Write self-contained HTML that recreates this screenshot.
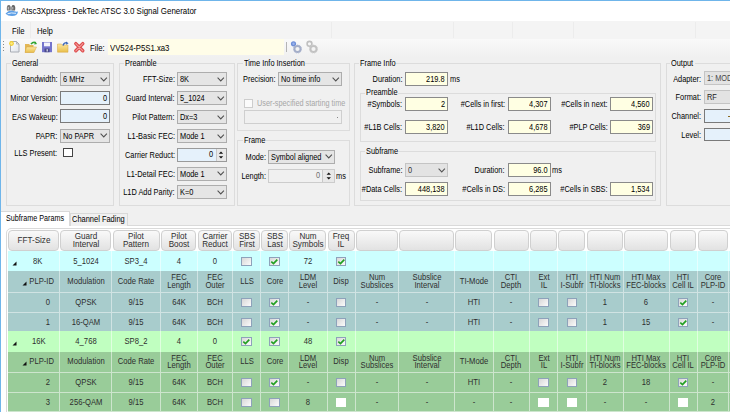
<!DOCTYPE html><html><head><meta charset="utf-8"><style>
html,body{margin:0;padding:0;width:730px;height:412px;overflow:hidden;background:#f0f0f0;}
body>div,body>svg{position:absolute;}
.t{position:absolute;white-space:nowrap;font-family:"Liberation Sans",sans-serif;}
</style></head><body>
<div style="left:0px;top:0px;width:730px;height:412px;background:#f0f0f0;"></div>
<div style="left:0px;top:0px;width:730px;height:21px;background:#fff;"></div>
<div style="left:0px;top:0px;width:730px;height:1px;background:#6fb5ea;"></div>
<div style="left:0px;top:0px;width:1px;height:412px;background:#6fb5ea;"></div>
<svg style="left:0px;top:0px" width="20" height="20" viewBox="0 0 20 20">
<path d="M7 10.5 q-0.8 -5.5 1.8 -5.5 q2.6 0 1.8 5.5z" fill="#777"/>
<path d="M11.5 10.5 q-0.8 -5.5 1.8 -5.5 q2.6 0 1.8 5.5z" fill="#666"/>
<path d="M8.3 9.5 v-2.5 M12.8 9.5 v-2.5" stroke="#ddd" stroke-width="0.8"/>
<path d="M5.5 13.5 q4 -4 8 -2.5 q3 1 4.5 0.5 q-0.5 4.5 -6 4.5 q-4.5 0 -6.5 -2.5z" fill="#5d9fe6"/>
<path d="M7.5 13.8 q3.5 -1.5 8.5 -0.5" fill="none" stroke="#e8f2fc" stroke-width="1"/>
</svg>
<div class="t" style="left:21px;top:7.38px;font-size:9px;line-height:9px;color:#000;transform-origin:0 50%;transform:scaleX(0.88);">Atsc3Xpress - DekTec ATSC 3.0 Signal Generator</div>
<div style="left:1px;top:21px;width:729px;height:17.5px;background:#f4f4f4;"></div>
<div style="left:30px;top:22px;width:1px;height:16px;background:#ececec;"></div>
<div style="left:331px;top:22px;width:1px;height:16px;background:#ececec;"></div>
<div style="left:453px;top:22px;width:1px;height:16px;background:#ececec;"></div>
<div style="left:512px;top:22px;width:1px;height:16px;background:#ececec;"></div>
<div style="left:573px;top:22px;width:1px;height:16px;background:#ececec;"></div>
<div style="left:695px;top:22px;width:1px;height:16px;background:#ececec;"></div>
<div class="t" style="left:12px;top:26.68px;font-size:9px;line-height:9px;color:#000;transform-origin:0 50%;transform:scaleX(0.86);">File</div>
<div class="t" style="left:37px;top:26.68px;font-size:9px;line-height:9px;color:#000;transform-origin:0 50%;transform:scaleX(0.86);">Help</div>
<div style="left:1px;top:38.5px;width:729px;height:18px;background:linear-gradient(#f9f9f9,#f0f0f0);"></div>
<div style="left:3px;top:41px;width:1px;height:1px;background:#8a8a8a;"></div>
<div style="left:3px;top:44px;width:1px;height:1px;background:#8a8a8a;"></div>
<div style="left:3px;top:47px;width:1px;height:1px;background:#8a8a8a;"></div>
<div style="left:3px;top:50px;width:1px;height:1px;background:#8a8a8a;"></div>
<svg style="left:0px;top:38px" width="90" height="18" viewBox="0 38 90 18">
<defs>
<linearGradient id="pg" x1="0" y1="0" x2="1" y2="1"><stop offset="0" stop-color="#ffffff"/><stop offset="1" stop-color="#dfe3ea"/></linearGradient>
<linearGradient id="fg" x1="0" y1="0" x2="0" y2="1"><stop offset="0" stop-color="#fbe7a0"/><stop offset="1" stop-color="#e9bf4a"/></linearGradient>
</defs>
<path d="M10.5 41.5 h6 l2.5 2.5 v8 h-8.5z" fill="url(#pg)" stroke="#a8acb4" stroke-width="1"/>
<path d="M16.5 41.5 v2.5 h2.5" fill="none" stroke="#a8acb4" stroke-width="0.8"/>
<circle cx="11.5" cy="43.5" r="2.4" fill="#f3cf2e"/>
<circle cx="11.5" cy="43.5" r="1.2" fill="#fbe98a"/>
<path d="M25 44 h4 l1 1 h3.5 v7.5 h-8.5z" fill="#e3b756"/>
<path d="M26.5 47 h10 l-2.5 5.5 h-9z" fill="url(#fg)" stroke="#d6a444" stroke-width="0.5"/>
<path d="M31 44.2 q2 -3 5 -1.5" fill="none" stroke="#32a432" stroke-width="1.5"/>
<path d="M35 41.8 l2.2 2.2 l-3 0.6z" fill="#32a432"/>
<path d="M42 42 h10 v10.2 h-10z" fill="#7474cc"/>
<rect x="44" y="42.5" width="6" height="3.8" fill="#f2f2fb"/>
<rect x="44.5" y="48.5" width="5" height="3.7" fill="#4a4a8a"/>
<rect x="46.5" y="49.2" width="1.5" height="2.3" fill="#c8c8e0"/>
<path d="M57.5 44 h4 l1 1 h5.5 v7.2 h-10.5z" fill="url(#fg)" stroke="#d6a444" stroke-width="0.5"/>
<path d="M63 45.5 q1 -3 4 -2.8" fill="none" stroke="#3a66b8" stroke-width="1.3"/>
<path d="M66 41.6 l2.6 1.6 l-2.4 1.6z" fill="#3a66b8"/>
<path d="M75.8 43.6 l7 7.2 M82.8 43.6 l-7 7.2" stroke="#de4c4c" stroke-width="3.4" stroke-linecap="round"/>
<path d="M75.8 43.6 l7 7.2 M82.8 43.6 l-7 7.2" stroke="#f29a9a" stroke-width="1.1" stroke-linecap="round"/>
</svg>
<div class="t" style="left:90px;top:43.68px;font-size:9px;line-height:9px;color:#000;transform-origin:0 50%;transform:scaleX(0.86);">File:</div>
<div style="left:107.5px;top:39.3px;width:176px;height:16px;background:#fffde8;"></div>
<div class="t" style="left:110px;top:43.68px;font-size:9px;line-height:9px;color:#000;transform-origin:0 50%;transform:scaleX(0.86);">VV524-P5S1.xa3</div>
<div style="left:286px;top:42px;width:1px;height:10px;background:#b4b4b4;"></div>
<svg style="left:284px;top:38px" width="40" height="18" viewBox="284 38 40 18">
<circle cx="293.5" cy="43.8" r="2.6" fill="#6f8fd8"/>
<circle cx="293.5" cy="43.8" r="1.2" fill="#9ab4ee"/>
<circle cx="297.5" cy="49" r="3.1" fill="none" stroke="#a4aec8" stroke-width="2"/>
<circle cx="297.5" cy="49" r="4" fill="none" stroke="#b4bcd4" stroke-width="1" stroke-dasharray="1.2 1"/>
<circle cx="309.5" cy="43.8" r="2.4" fill="none" stroke="#c0c0c0" stroke-width="1.6"/>
<circle cx="313.5" cy="49" r="3.1" fill="none" stroke="#c2c2c2" stroke-width="2"/>
<circle cx="313.5" cy="49" r="4" fill="none" stroke="#cfcfcf" stroke-width="1" stroke-dasharray="1.2 1"/>
</svg>
<div style="left:5.5px;top:63px;width:108px;height:143px;border:1px solid #dcdcdc;box-sizing:border-box;"></div>
<div style="left:11px;top:59px;width:28px;height:8px;background:#f0f0f0;"></div>
<div class="t" style="left:12px;top:58.88px;font-size:9px;line-height:9px;color:#000;transform-origin:0 50%;transform:scaleX(0.82);">General</div>
<div class="t" style="right:672.5px;top:75.18px;font-size:9px;line-height:9px;color:#000;transform-origin:100% 50%;transform:scaleX(0.82);">Bandwidth:</div>
<div style="left:60px;top:72px;width:50px;height:14px;background:#e5e5e5;border:1px solid #adadad;box-sizing:border-box;"></div>
<div class="t" style="left:63px;top:75.38px;font-size:9px;line-height:9px;color:#000;transform-origin:0 50%;transform:scaleX(0.82);">6 MHz</div>
<svg style="left:99.5px;top:76.8px" width="8" height="5" viewBox="0 0 8 5"><path d="M0.6 0.6 L3.75 3.9 L6.9 0.6" fill="none" stroke="#505050" stroke-width="1.05"/></svg>
<div class="t" style="right:672.5px;top:94.18px;font-size:9px;line-height:9px;color:#000;transform-origin:100% 50%;transform:scaleX(0.82);">Minor Version:</div>
<div style="left:60px;top:91px;width:50px;height:14px;background:#e5f1fb;border:1px solid #7a7a7a;box-sizing:border-box;"></div>
<div class="t" style="right:623px;top:93.88px;font-size:9px;line-height:9px;color:#000;transform-origin:100% 50%;transform:scaleX(0.82);">0</div>
<div class="t" style="right:672.5px;top:112.68px;font-size:9px;line-height:9px;color:#000;transform-origin:100% 50%;transform:scaleX(0.82);">EAS Wakeup:</div>
<div style="left:60px;top:109px;width:50px;height:14px;background:#e5f1fb;border:1px solid #7a7a7a;box-sizing:border-box;"></div>
<div class="t" style="right:623px;top:111.88px;font-size:9px;line-height:9px;color:#000;transform-origin:100% 50%;transform:scaleX(0.82);">0</div>
<div class="t" style="right:672.5px;top:131.68px;font-size:9px;line-height:9px;color:#000;transform-origin:100% 50%;transform:scaleX(0.82);">PAPR:</div>
<div style="left:60px;top:128.5px;width:50px;height:14px;background:#e5e5e5;border:1px solid #adadad;box-sizing:border-box;"></div>
<div class="t" style="left:63px;top:131.88px;font-size:9px;line-height:9px;color:#000;transform-origin:0 50%;transform:scaleX(0.82);">No PAPR</div>
<svg style="left:99.5px;top:133.3px" width="8" height="5" viewBox="0 0 8 5"><path d="M0.6 0.6 L3.75 3.9 L6.9 0.6" fill="none" stroke="#505050" stroke-width="1.05"/></svg>
<div class="t" style="right:672.5px;top:149.18px;font-size:9px;line-height:9px;color:#000;transform-origin:100% 50%;transform:scaleX(0.82);">LLS Present:</div>
<div style="left:63.3px;top:147.5px;width:10px;height:9.5px;background:#fff;border:1px solid #444;box-sizing:border-box;"></div>
<div style="left:118.5px;top:63px;width:116px;height:143px;border:1px solid #dcdcdc;box-sizing:border-box;"></div>
<div style="left:124px;top:59px;width:33px;height:8px;background:#f0f0f0;"></div>
<div class="t" style="left:125px;top:58.88px;font-size:9px;line-height:9px;color:#000;transform-origin:0 50%;transform:scaleX(0.82);">Preamble</div>
<div class="t" style="right:555px;top:75.18px;font-size:9px;line-height:9px;color:#000;transform-origin:100% 50%;transform:scaleX(0.82);">FFT-Size:</div>
<div style="left:177px;top:72px;width:50px;height:14px;background:#e5e5e5;border:1px solid #adadad;box-sizing:border-box;"></div>
<div class="t" style="left:180px;top:75.38px;font-size:9px;line-height:9px;color:#000;transform-origin:0 50%;transform:scaleX(0.82);">8K</div>
<svg style="left:216.5px;top:76.8px" width="8" height="5" viewBox="0 0 8 5"><path d="M0.6 0.6 L3.75 3.9 L6.9 0.6" fill="none" stroke="#505050" stroke-width="1.05"/></svg>
<div class="t" style="right:555px;top:94.18px;font-size:9px;line-height:9px;color:#000;transform-origin:100% 50%;transform:scaleX(0.82);">Guard Interval:</div>
<div style="left:177px;top:91px;width:50px;height:14px;background:#e5e5e5;border:1px solid #adadad;box-sizing:border-box;"></div>
<div class="t" style="left:180px;top:94.38px;font-size:9px;line-height:9px;color:#000;transform-origin:0 50%;transform:scaleX(0.82);">5_1024</div>
<svg style="left:216.5px;top:95.8px" width="8" height="5" viewBox="0 0 8 5"><path d="M0.6 0.6 L3.75 3.9 L6.9 0.6" fill="none" stroke="#505050" stroke-width="1.05"/></svg>
<div class="t" style="right:555px;top:113.18px;font-size:9px;line-height:9px;color:#000;transform-origin:100% 50%;transform:scaleX(0.82);">Pilot Pattern:</div>
<div style="left:177px;top:110px;width:50px;height:14px;background:#e5e5e5;border:1px solid #adadad;box-sizing:border-box;"></div>
<div class="t" style="left:180px;top:113.38px;font-size:9px;line-height:9px;color:#000;transform-origin:0 50%;transform:scaleX(0.82);">Dx=3</div>
<svg style="left:216.5px;top:114.8px" width="8" height="5" viewBox="0 0 8 5"><path d="M0.6 0.6 L3.75 3.9 L6.9 0.6" fill="none" stroke="#505050" stroke-width="1.05"/></svg>
<div class="t" style="right:555px;top:132.18px;font-size:9px;line-height:9px;color:#000;transform-origin:100% 50%;transform:scaleX(0.82);">L1-Basic FEC:</div>
<div style="left:177px;top:129px;width:50px;height:14px;background:#e5e5e5;border:1px solid #adadad;box-sizing:border-box;"></div>
<div class="t" style="left:180px;top:132.38px;font-size:9px;line-height:9px;color:#000;transform-origin:0 50%;transform:scaleX(0.82);">Mode 1</div>
<svg style="left:216.5px;top:133.8px" width="8" height="5" viewBox="0 0 8 5"><path d="M0.6 0.6 L3.75 3.9 L6.9 0.6" fill="none" stroke="#505050" stroke-width="1.05"/></svg>
<div class="t" style="right:555px;top:151.18px;font-size:9px;line-height:9px;color:#000;transform-origin:100% 50%;transform:scaleX(0.82);">Carrier Reduct:</div>
<div style="left:177px;top:147.5px;width:50px;height:14px;background:#e5f1fb;border:1px solid #9a9a9a;box-sizing:border-box;"></div>
<div class="t" style="right:517px;top:150.38px;font-size:9px;line-height:9px;color:#000;transform-origin:100% 50%;transform:scaleX(0.82);">0</div>
<div style="left:215.5px;top:148.5px;width:10.5px;height:12px;background:#e8e8e8;border-left:1px solid #c8c8c8;box-sizing:border-box;"></div>
<svg style="left:215px;top:147.5px" width="12" height="14" viewBox="215 147.5 12 14"><path d="M218.8 153.3 L221.0 150.9 L223.2 153.3Z M218.8 155.7 L221.0 158.1 L223.2 155.7Z" fill="#111"/></svg>
<div class="t" style="right:555px;top:169.68px;font-size:9px;line-height:9px;color:#000;transform-origin:100% 50%;transform:scaleX(0.82);">L1-Detail FEC:</div>
<div style="left:177px;top:166.5px;width:50px;height:14px;background:#e5e5e5;border:1px solid #adadad;box-sizing:border-box;"></div>
<div class="t" style="left:180px;top:169.88px;font-size:9px;line-height:9px;color:#000;transform-origin:0 50%;transform:scaleX(0.82);">Mode 1</div>
<svg style="left:216.5px;top:171.3px" width="8" height="5" viewBox="0 0 8 5"><path d="M0.6 0.6 L3.75 3.9 L6.9 0.6" fill="none" stroke="#505050" stroke-width="1.05"/></svg>
<div class="t" style="right:555px;top:188.18px;font-size:9px;line-height:9px;color:#000;transform-origin:100% 50%;transform:scaleX(0.82);">L1D Add Parity:</div>
<div style="left:177px;top:185px;width:50px;height:14px;background:#e5e5e5;border:1px solid #adadad;box-sizing:border-box;"></div>
<div class="t" style="left:180px;top:188.38px;font-size:9px;line-height:9px;color:#000;transform-origin:0 50%;transform:scaleX(0.82);">K=0</div>
<svg style="left:216.5px;top:189.8px" width="8" height="5" viewBox="0 0 8 5"><path d="M0.6 0.6 L3.75 3.9 L6.9 0.6" fill="none" stroke="#505050" stroke-width="1.05"/></svg>
<div style="left:237px;top:63px;width:113px;height:67.5px;border:1px solid #dcdcdc;box-sizing:border-box;"></div>
<div style="left:243px;top:59px;width:62px;height:8px;background:#f0f0f0;"></div>
<div class="t" style="left:244px;top:58.88px;font-size:9px;line-height:9px;color:#000;transform-origin:0 50%;transform:scaleX(0.82);">Time Info Insertion</div>
<div class="t" style="right:454px;top:75.18px;font-size:9px;line-height:9px;color:#000;transform-origin:100% 50%;transform:scaleX(0.82);">Precision:</div>
<div style="left:278px;top:72px;width:64px;height:14px;background:#e5e5e5;border:1px solid #adadad;box-sizing:border-box;"></div>
<div class="t" style="left:281px;top:75.38px;font-size:9px;line-height:9px;color:#000;transform-origin:0 50%;transform:scaleX(0.82);">No time info</div>
<svg style="left:331.5px;top:76.8px" width="8" height="5" viewBox="0 0 8 5"><path d="M0.6 0.6 L3.75 3.9 L6.9 0.6" fill="none" stroke="#505050" stroke-width="1.05"/></svg>
<div style="left:243.5px;top:98.5px;width:9px;height:9px;background:#fbfbfb;border:1px solid #cdcdcd;box-sizing:border-box;"></div>
<div class="t" style="left:257px;top:99.38px;font-size:9px;line-height:9px;color:#a6a6a6;transform-origin:0 50%;transform:scaleX(0.81);">User-specified starting time</div>
<div style="left:244px;top:110px;width:98px;height:14px;background:#f0f0f0;border:1px solid #cfcfcf;box-sizing:border-box;"></div>
<div style="left:337px;top:117px;width:1px;height:1px;background:#888;"></div>
<div style="left:237px;top:140px;width:113px;height:66px;border:1px solid #dcdcdc;box-sizing:border-box;"></div>
<div style="left:243px;top:136px;width:22px;height:8px;background:#f0f0f0;"></div>
<div class="t" style="left:244px;top:135.88px;font-size:9px;line-height:9px;color:#000;transform-origin:0 50%;transform:scaleX(0.82);">Frame</div>
<div class="t" style="right:464px;top:153.18px;font-size:9px;line-height:9px;color:#000;transform-origin:100% 50%;transform:scaleX(0.82);">Mode:</div>
<div style="left:268px;top:149.5px;width:67px;height:14px;background:#e5e5e5;border:1px solid #adadad;box-sizing:border-box;"></div>
<div class="t" style="left:271px;top:152.88px;font-size:9px;line-height:9px;color:#000;transform-origin:0 50%;transform:scaleX(0.82);">Symbol aligned</div>
<svg style="left:324.5px;top:154.3px" width="8" height="5" viewBox="0 0 8 5"><path d="M0.6 0.6 L3.75 3.9 L6.9 0.6" fill="none" stroke="#505050" stroke-width="1.05"/></svg>
<div class="t" style="right:464px;top:172.18px;font-size:9px;line-height:9px;color:#000;transform-origin:100% 50%;transform:scaleX(0.82);">Length:</div>
<div style="left:268px;top:168.5px;width:67px;height:14px;background:#f0f0f0;border:1px solid #cccccc;box-sizing:border-box;"></div>
<div class="t" style="right:410px;top:171.38px;font-size:9px;line-height:9px;color:#6d6d6d;transform-origin:100% 50%;transform:scaleX(0.82);">0</div>
<div style="left:322.0px;top:169.5px;width:12.0px;height:12px;background:#e8e8e8;border-left:1px solid #c8c8c8;box-sizing:border-box;"></div>
<svg style="left:321.5px;top:168.5px" width="13.5" height="14" viewBox="321.5 168.5 13.5 14"><path d="M326.05 174.3 L328.25 171.9 L330.45 174.3Z M326.05 176.7 L328.25 179.1 L330.45 176.7Z" fill="#111"/></svg>
<div class="t" style="left:336px;top:172.18px;font-size:9px;line-height:9px;color:#000;transform-origin:0 50%;transform:scaleX(0.82);">ms</div>
<div style="left:353.5px;top:63px;width:307px;height:143px;border:1px solid #dcdcdc;box-sizing:border-box;"></div>
<div style="left:359px;top:59px;width:36px;height:8px;background:#f0f0f0;"></div>
<div class="t" style="left:360px;top:58.88px;font-size:9px;line-height:9px;color:#000;transform-origin:0 50%;transform:scaleX(0.82);">Frame Info</div>
<div class="t" style="right:327.5px;top:75.18px;font-size:9px;line-height:9px;color:#000;transform-origin:100% 50%;transform:scaleX(0.82);">Duration:</div>
<div style="left:405px;top:72px;width:43px;height:14px;background:#ffffe3;border:1px solid #8a8a8a;box-sizing:border-box;"></div>
<div class="t" style="right:285px;top:74.88px;font-size:9px;line-height:9px;color:#000;transform-origin:100% 50%;transform:scaleX(0.82);">219.8</div>
<div class="t" style="left:449.5px;top:75.18px;font-size:9px;line-height:9px;color:#000;transform-origin:0 50%;transform:scaleX(0.82);">ms</div>
<div style="left:360px;top:92.5px;width:296px;height:49.5px;border:1px solid #dcdcdc;box-sizing:border-box;"></div>
<div style="left:365px;top:88.5px;width:33px;height:8px;background:#f0f0f0;"></div>
<div class="t" style="left:366px;top:88.38px;font-size:9px;line-height:9px;color:#000;transform-origin:0 50%;transform:scaleX(0.82);">Preamble</div>
<div class="t" style="right:327.5px;top:100.18px;font-size:9px;line-height:9px;color:#000;transform-origin:100% 50%;transform:scaleX(0.82);">#Symbols:</div>
<div style="left:405px;top:97px;width:43px;height:14px;background:#ffffe3;border:1px solid #8a8a8a;box-sizing:border-box;"></div>
<div class="t" style="right:285px;top:99.88px;font-size:9px;line-height:9px;color:#000;transform-origin:100% 50%;transform:scaleX(0.82);">2</div>
<div class="t" style="right:225px;top:100.18px;font-size:9px;line-height:9px;color:#000;transform-origin:100% 50%;transform:scaleX(0.82);">#Cells in first:</div>
<div style="left:507.5px;top:97px;width:43px;height:14px;background:#ffffe3;border:1px solid #8a8a8a;box-sizing:border-box;"></div>
<div class="t" style="right:182.5px;top:99.88px;font-size:9px;line-height:9px;color:#000;transform-origin:100% 50%;transform:scaleX(0.82);">4,307</div>
<div class="t" style="right:122px;top:100.18px;font-size:9px;line-height:9px;color:#000;transform-origin:100% 50%;transform:scaleX(0.82);">#Cells in next:</div>
<div style="left:610px;top:97px;width:43px;height:14px;background:#ffffe3;border:1px solid #8a8a8a;box-sizing:border-box;"></div>
<div class="t" style="right:80px;top:99.88px;font-size:9px;line-height:9px;color:#000;transform-origin:100% 50%;transform:scaleX(0.82);">4,560</div>
<div class="t" style="right:327.5px;top:123.18px;font-size:9px;line-height:9px;color:#000;transform-origin:100% 50%;transform:scaleX(0.82);">#L1B Cells:</div>
<div style="left:405px;top:120px;width:43px;height:14px;background:#ffffe3;border:1px solid #8a8a8a;box-sizing:border-box;"></div>
<div class="t" style="right:285px;top:122.88px;font-size:9px;line-height:9px;color:#000;transform-origin:100% 50%;transform:scaleX(0.82);">3,820</div>
<div class="t" style="right:225px;top:123.18px;font-size:9px;line-height:9px;color:#000;transform-origin:100% 50%;transform:scaleX(0.82);">#L1D Cells:</div>
<div style="left:507.5px;top:120px;width:43px;height:14px;background:#ffffe3;border:1px solid #8a8a8a;box-sizing:border-box;"></div>
<div class="t" style="right:182.5px;top:122.88px;font-size:9px;line-height:9px;color:#000;transform-origin:100% 50%;transform:scaleX(0.82);">4,678</div>
<div class="t" style="right:122px;top:123.18px;font-size:9px;line-height:9px;color:#000;transform-origin:100% 50%;transform:scaleX(0.82);">#PLP Cells:</div>
<div style="left:610px;top:120px;width:43px;height:14px;background:#ffffe3;border:1px solid #8a8a8a;box-sizing:border-box;"></div>
<div class="t" style="right:80px;top:122.88px;font-size:9px;line-height:9px;color:#000;transform-origin:100% 50%;transform:scaleX(0.82);">369</div>
<div style="left:360px;top:151px;width:296px;height:50px;border:1px solid #dcdcdc;box-sizing:border-box;"></div>
<div style="left:365px;top:147px;width:33px;height:8px;background:#f0f0f0;"></div>
<div class="t" style="left:366px;top:146.88px;font-size:9px;line-height:9px;color:#000;transform-origin:0 50%;transform:scaleX(0.82);">Subframe</div>
<div class="t" style="right:327.5px;top:166.18px;font-size:9px;line-height:9px;color:#000;transform-origin:100% 50%;transform:scaleX(0.82);">Subframe:</div>
<div style="left:405px;top:163px;width:43px;height:14px;background:#e3e3e3;border:1px solid #c4c4c4;box-sizing:border-box;"></div>
<div class="t" style="left:408px;top:166.38px;font-size:9px;line-height:9px;color:#333;transform-origin:0 50%;transform:scaleX(0.82);">0</div>
<svg style="left:437.5px;top:167.8px" width="8" height="5" viewBox="0 0 8 5"><path d="M0.6 0.6 L3.75 3.9 L6.9 0.6" fill="none" stroke="#555" stroke-width="1.05"/></svg>
<div class="t" style="right:225px;top:166.18px;font-size:9px;line-height:9px;color:#000;transform-origin:100% 50%;transform:scaleX(0.82);">Duration:</div>
<div style="left:507.5px;top:163px;width:43px;height:14px;background:#ffffe3;border:1px solid #8a8a8a;box-sizing:border-box;"></div>
<div class="t" style="right:182.5px;top:165.88px;font-size:9px;line-height:9px;color:#000;transform-origin:100% 50%;transform:scaleX(0.82);">96.0</div>
<div class="t" style="left:552px;top:166.18px;font-size:9px;line-height:9px;color:#000;transform-origin:0 50%;transform:scaleX(0.82);">ms</div>
<div class="t" style="right:327.5px;top:185.18px;font-size:9px;line-height:9px;color:#000;transform-origin:100% 50%;transform:scaleX(0.82);">#Data Cells:</div>
<div style="left:405px;top:182px;width:43px;height:14px;background:#ffffe3;border:1px solid #8a8a8a;box-sizing:border-box;"></div>
<div class="t" style="right:285px;top:184.88px;font-size:9px;line-height:9px;color:#000;transform-origin:100% 50%;transform:scaleX(0.82);">448,138</div>
<div class="t" style="right:225px;top:185.18px;font-size:9px;line-height:9px;color:#000;transform-origin:100% 50%;transform:scaleX(0.82);">#Cells in DS:</div>
<div style="left:507.5px;top:182px;width:43px;height:14px;background:#ffffe3;border:1px solid #8a8a8a;box-sizing:border-box;"></div>
<div class="t" style="right:182.5px;top:184.88px;font-size:9px;line-height:9px;color:#000;transform-origin:100% 50%;transform:scaleX(0.82);">6,285</div>
<div class="t" style="right:122px;top:185.18px;font-size:9px;line-height:9px;color:#000;transform-origin:100% 50%;transform:scaleX(0.82);">#Cells in SBS:</div>
<div style="left:610px;top:182px;width:43px;height:14px;background:#ffffe3;border:1px solid #8a8a8a;box-sizing:border-box;"></div>
<div class="t" style="right:80px;top:184.88px;font-size:9px;line-height:9px;color:#000;transform-origin:100% 50%;transform:scaleX(0.82);">1,534</div>
<div style="left:665.5px;top:63px;width:80px;height:143px;border:1px solid #dcdcdc;box-sizing:border-box;"></div>
<div style="left:670px;top:59px;width:25px;height:8px;background:#f0f0f0;"></div>
<div class="t" style="left:671px;top:58.88px;font-size:9px;line-height:9px;color:#000;transform-origin:0 50%;transform:scaleX(0.82);">Output</div>
<div class="t" style="right:29px;top:74.68px;font-size:9px;line-height:9px;color:#000;transform-origin:100% 50%;transform:scaleX(0.82);">Adapter:</div>
<div style="left:704px;top:71px;width:40px;height:14px;background:#e3e3e3;border:1px solid #c4c4c4;box-sizing:border-box;"></div>
<div class="t" style="left:707px;top:74.38px;font-size:9px;line-height:9px;color:#4a4a4a;transform-origin:0 50%;transform:scaleX(0.82);">1: MOD</div>
<svg style="left:733.5px;top:75.8px" width="8" height="5" viewBox="0 0 8 5"><path d="M0.6 0.6 L3.75 3.9 L6.9 0.6" fill="none" stroke="#555" stroke-width="1.05"/></svg>
<div class="t" style="right:29px;top:93.18px;font-size:9px;line-height:9px;color:#000;transform-origin:100% 50%;transform:scaleX(0.82);">Format:</div>
<div style="left:704px;top:90px;width:40px;height:14px;background:#e3e3e3;border:1px solid #c4c4c4;box-sizing:border-box;"></div>
<div class="t" style="left:707px;top:93.38px;font-size:9px;line-height:9px;color:#222;transform-origin:0 50%;transform:scaleX(0.82);">RF</div>
<svg style="left:733.5px;top:94.8px" width="8" height="5" viewBox="0 0 8 5"><path d="M0.6 0.6 L3.75 3.9 L6.9 0.6" fill="none" stroke="#555" stroke-width="1.05"/></svg>
<div class="t" style="right:29px;top:112.18px;font-size:9px;line-height:9px;color:#000;transform-origin:100% 50%;transform:scaleX(0.82);">Channel:</div>
<div style="left:704px;top:108.5px;width:40px;height:14px;background:#e5f1fb;border:1px solid #7a7a7a;box-sizing:border-box;"></div>
<div style="left:727.5px;top:116px;width:2px;height:1px;background:#8a6a20;"></div>
<div class="t" style="right:29px;top:130.68px;font-size:9px;line-height:9px;color:#000;transform-origin:100% 50%;transform:scaleX(0.82);">Level:</div>
<div style="left:704px;top:127.5px;width:40px;height:13px;background:#e5f1fb;border:1px solid #7a7a7a;box-sizing:border-box;"></div>
<div style="left:1px;top:225px;width:729px;height:187px;background:#fff;"></div>
<div style="left:1px;top:225px;width:729px;height:1px;background:#dadada;"></div>
<div style="left:69.5px;top:212.5px;width:58px;height:13px;background:#f0f0f0;border:1px solid #d9d9d9;border-bottom:none;box-sizing:border-box;"></div>
<div style="left:1px;top:210.5px;width:68.5px;height:15px;background:#fff;border:1px solid #d9d9d9;border-bottom:none;border-left:none;box-sizing:border-box;"></div>
<div class="t" style="left:6.3px;top:213.88px;font-size:9px;line-height:9px;color:#000;transform-origin:0 50%;transform:scaleX(0.8);">Subframe Params</div>
<div class="t" style="left:72px;top:215.18px;font-size:9px;line-height:9px;color:#000;transform-origin:0 50%;transform:scaleX(0.83);">Channel Fading</div>
<div style="left:5.5px;top:228px;width:730px;height:190px;border:1px solid #dadada;border-radius:5px;box-sizing:border-box;"></div>
<div style="left:8px;top:230px;width:50.5px;height:21px;background:linear-gradient(#f9f9f9,#e2e2e2);border:1px solid #d0d0d0;border-radius:4px;box-sizing:border-box;"></div>
<div class="t" style="left:-166.4px;width:400px;text-align:center;top:236.18px;font-size:9px;line-height:9px;color:#2e2e2e;transform-origin:50% 50%;transform:scaleX(0.9);">FFT-Size</div>
<div style="left:59.900000000000006px;top:230px;width:51.19999999999999px;height:21px;background:linear-gradient(#f9f9f9,#e2e2e2);border:1px solid #d0d0d0;border-radius:4px;box-sizing:border-box;"></div>
<div class="t" style="left:-114.5px;width:400px;text-align:center;top:231.88px;font-size:9px;line-height:9px;color:#2e2e2e;transform-origin:50% 50%;transform:scaleX(0.9);">Guard</div>
<div class="t" style="left:-114.5px;width:400px;text-align:center;top:239.58px;font-size:9px;line-height:9px;color:#2e2e2e;transform-origin:50% 50%;transform:scaleX(0.9);">Interval</div>
<div style="left:112.5px;top:230px;width:47.5px;height:21px;background:linear-gradient(#f9f9f9,#e2e2e2);border:1px solid #d0d0d0;border-radius:4px;box-sizing:border-box;"></div>
<div class="t" style="left:-63.75px;width:400px;text-align:center;top:231.88px;font-size:9px;line-height:9px;color:#2e2e2e;transform-origin:50% 50%;transform:scaleX(0.9);">Pilot</div>
<div class="t" style="left:-63.75px;width:400px;text-align:center;top:239.58px;font-size:9px;line-height:9px;color:#2e2e2e;transform-origin:50% 50%;transform:scaleX(0.9);">Pattern</div>
<div style="left:161.39999999999998px;top:230px;width:35.10000000000002px;height:21px;background:linear-gradient(#f9f9f9,#e2e2e2);border:1px solid #d0d0d0;border-radius:4px;box-sizing:border-box;"></div>
<div class="t" style="left:-21.05000000000001px;width:400px;text-align:center;top:231.88px;font-size:9px;line-height:9px;color:#2e2e2e;transform-origin:50% 50%;transform:scaleX(0.9);">Pilot</div>
<div class="t" style="left:-21.05000000000001px;width:400px;text-align:center;top:239.58px;font-size:9px;line-height:9px;color:#2e2e2e;transform-origin:50% 50%;transform:scaleX(0.9);">Boost</div>
<div style="left:197.89999999999998px;top:230px;width:34.00000000000003px;height:21px;background:linear-gradient(#f9f9f9,#e2e2e2);border:1px solid #d0d0d0;border-radius:4px;box-sizing:border-box;"></div>
<div class="t" style="left:14.899999999999977px;width:400px;text-align:center;top:231.88px;font-size:9px;line-height:9px;color:#2e2e2e;transform-origin:50% 50%;transform:scaleX(0.9);">Carrier</div>
<div class="t" style="left:14.899999999999977px;width:400px;text-align:center;top:239.58px;font-size:9px;line-height:9px;color:#2e2e2e;transform-origin:50% 50%;transform:scaleX(0.9);">Reduct</div>
<div style="left:233.29999999999998px;top:230px;width:26.50000000000003px;height:21px;background:linear-gradient(#f9f9f9,#e2e2e2);border:1px solid #d0d0d0;border-radius:4px;box-sizing:border-box;"></div>
<div class="t" style="left:46.55000000000001px;width:400px;text-align:center;top:231.88px;font-size:9px;line-height:9px;color:#2e2e2e;transform-origin:50% 50%;transform:scaleX(0.9);">SBS</div>
<div class="t" style="left:46.55000000000001px;width:400px;text-align:center;top:239.58px;font-size:9px;line-height:9px;color:#2e2e2e;transform-origin:50% 50%;transform:scaleX(0.9);">First</div>
<div style="left:261.2px;top:230px;width:26.700000000000045px;height:21px;background:linear-gradient(#f9f9f9,#e2e2e2);border:1px solid #d0d0d0;border-radius:4px;box-sizing:border-box;"></div>
<div class="t" style="left:74.55000000000001px;width:400px;text-align:center;top:231.88px;font-size:9px;line-height:9px;color:#2e2e2e;transform-origin:50% 50%;transform:scaleX(0.9);">SBS</div>
<div class="t" style="left:74.55000000000001px;width:400px;text-align:center;top:239.58px;font-size:9px;line-height:9px;color:#2e2e2e;transform-origin:50% 50%;transform:scaleX(0.9);">Last</div>
<div style="left:289.3px;top:230px;width:37.10000000000002px;height:21px;background:linear-gradient(#f9f9f9,#e2e2e2);border:1px solid #d0d0d0;border-radius:4px;box-sizing:border-box;"></div>
<div class="t" style="left:107.85000000000002px;width:400px;text-align:center;top:231.88px;font-size:9px;line-height:9px;color:#2e2e2e;transform-origin:50% 50%;transform:scaleX(0.9);">Num</div>
<div class="t" style="left:107.85000000000002px;width:400px;text-align:center;top:239.58px;font-size:9px;line-height:9px;color:#2e2e2e;transform-origin:50% 50%;transform:scaleX(0.9);">Symbols</div>
<div style="left:327.8px;top:230px;width:26.80000000000001px;height:21px;background:linear-gradient(#f9f9f9,#e2e2e2);border:1px solid #d0d0d0;border-radius:4px;box-sizing:border-box;"></div>
<div class="t" style="left:141.20000000000005px;width:400px;text-align:center;top:231.88px;font-size:9px;line-height:9px;color:#2e2e2e;transform-origin:50% 50%;transform:scaleX(0.9);">Freq</div>
<div class="t" style="left:141.20000000000005px;width:400px;text-align:center;top:239.58px;font-size:9px;line-height:9px;color:#2e2e2e;transform-origin:50% 50%;transform:scaleX(0.9);">IL</div>
<div style="left:356.0px;top:230px;width:41.900000000000034px;height:21px;background:linear-gradient(#f9f9f9,#e2e2e2);border:1px solid #d0d0d0;border-radius:4px;box-sizing:border-box;"></div>
<div style="left:399.3px;top:230px;width:54.5px;height:21px;background:linear-gradient(#f9f9f9,#e2e2e2);border:1px solid #d0d0d0;border-radius:4px;box-sizing:border-box;"></div>
<div style="left:455.2px;top:230px;width:37.200000000000045px;height:21px;background:linear-gradient(#f9f9f9,#e2e2e2);border:1px solid #d0d0d0;border-radius:4px;box-sizing:border-box;"></div>
<div style="left:493.8px;top:230px;width:35.19999999999999px;height:21px;background:linear-gradient(#f9f9f9,#e2e2e2);border:1px solid #d0d0d0;border-radius:4px;box-sizing:border-box;"></div>
<div style="left:530.4000000000001px;top:230px;width:26.399999999999864px;height:21px;background:linear-gradient(#f9f9f9,#e2e2e2);border:1px solid #d0d0d0;border-radius:4px;box-sizing:border-box;"></div>
<div style="left:558.2px;top:230px;width:27.299999999999955px;height:21px;background:linear-gradient(#f9f9f9,#e2e2e2);border:1px solid #d0d0d0;border-radius:4px;box-sizing:border-box;"></div>
<div style="left:586.9000000000001px;top:230px;width:35.999999999999886px;height:21px;background:linear-gradient(#f9f9f9,#e2e2e2);border:1px solid #d0d0d0;border-radius:4px;box-sizing:border-box;"></div>
<div style="left:624.3000000000001px;top:230px;width:44.19999999999993px;height:21px;background:linear-gradient(#f9f9f9,#e2e2e2);border:1px solid #d0d0d0;border-radius:4px;box-sizing:border-box;"></div>
<div style="left:669.9000000000001px;top:230px;width:26.499999999999886px;height:21px;background:linear-gradient(#f9f9f9,#e2e2e2);border:1px solid #d0d0d0;border-radius:4px;box-sizing:border-box;"></div>
<div style="left:697.8000000000001px;top:230px;width:30.29999999999984px;height:21px;background:linear-gradient(#f9f9f9,#e2e2e2);border:1px solid #d0d0d0;border-radius:4px;box-sizing:border-box;"></div>
<div style="left:729.5px;top:230px;width:39.799999999999955px;height:21px;background:linear-gradient(#f9f9f9,#e2e2e2);border:1px solid #d0d0d0;border-radius:4px;box-sizing:border-box;"></div>
<div style="left:8px;top:251px;width:722px;height:20.30000000000001px;background:#ccffff;"></div>
<div style="left:58.6px;top:251px;width:1.2px;height:20.30000000000001px;background:#e6ffff;"></div>
<div style="left:111.2px;top:251px;width:1.2px;height:20.30000000000001px;background:#e6ffff;"></div>
<div style="left:160.1px;top:251px;width:1.2px;height:20.30000000000001px;background:#e6ffff;"></div>
<div style="left:196.6px;top:251px;width:1.2px;height:20.30000000000001px;background:#e6ffff;"></div>
<div style="left:232.0px;top:251px;width:1.2px;height:20.30000000000001px;background:#e6ffff;"></div>
<div style="left:259.9px;top:251px;width:1.2px;height:20.30000000000001px;background:#e6ffff;"></div>
<div style="left:288.0px;top:251px;width:1.2px;height:20.30000000000001px;background:#e6ffff;"></div>
<div style="left:326.5px;top:251px;width:1.2px;height:20.30000000000001px;background:#e6ffff;"></div>
<div style="left:354.7px;top:251px;width:1.2px;height:20.30000000000001px;background:#e6ffff;"></div>
<div style="left:398.0px;top:251px;width:1.2px;height:20.30000000000001px;background:#e6ffff;"></div>
<div style="left:453.9px;top:251px;width:1.2px;height:20.30000000000001px;background:#e6ffff;"></div>
<div style="left:492.5px;top:251px;width:1.2px;height:20.30000000000001px;background:#e6ffff;"></div>
<div style="left:529.1px;top:251px;width:1.2px;height:20.30000000000001px;background:#e6ffff;"></div>
<div style="left:556.9px;top:251px;width:1.2px;height:20.30000000000001px;background:#e6ffff;"></div>
<div style="left:585.6px;top:251px;width:1.2px;height:20.30000000000001px;background:#e6ffff;"></div>
<div style="left:623.0px;top:251px;width:1.2px;height:20.30000000000001px;background:#e6ffff;"></div>
<div style="left:668.6px;top:251px;width:1.2px;height:20.30000000000001px;background:#e6ffff;"></div>
<div style="left:696.5px;top:251px;width:1.2px;height:20.30000000000001px;background:#e6ffff;"></div>
<div style="left:728.1999999999999px;top:251px;width:1.2px;height:20.30000000000001px;background:#e6ffff;"></div>
<svg style="left:12px;top:260.8px" width="5" height="5" viewBox="0 0 5 5"><path d="M4.5 0.5 V4.5 H0.5z" fill="#111"/></svg>
<div class="t" style="left:33px;top:257.18px;font-size:9px;line-height:9px;color:#2e2e2e;transform-origin:0 50%;transform:scaleX(0.85);">8K</div>
<div class="t" style="left:-114.5px;width:400px;text-align:center;top:257.18px;font-size:9px;line-height:9px;color:#2e2e2e;transform-origin:50% 50%;transform:scaleX(0.85);">5_1024</div>
<div class="t" style="left:-63.75px;width:400px;text-align:center;top:257.18px;font-size:9px;line-height:9px;color:#2e2e2e;transform-origin:50% 50%;transform:scaleX(0.85);">SP3_4</div>
<div class="t" style="left:-21.05000000000001px;width:400px;text-align:center;top:257.18px;font-size:9px;line-height:9px;color:#2e2e2e;transform-origin:50% 50%;transform:scaleX(0.85);">4</div>
<div class="t" style="left:14.899999999999977px;width:400px;text-align:center;top:257.18px;font-size:9px;line-height:9px;color:#2e2e2e;transform-origin:50% 50%;transform:scaleX(0.85);">0</div>
<div style="left:241.35000000000002px;top:256.65px;width:10.4px;height:9px;background:linear-gradient(135deg,#d8d8d8,#fbfbfb);border:1px solid #8ea2ba;box-sizing:border-box;"></div>
<div style="left:269.35px;top:256.65px;width:10.4px;height:9px;background:linear-gradient(135deg,#d8d8d8,#fbfbfb);border:1px solid #8ea2ba;box-sizing:border-box;"></div>
<svg style="left:269.35px;top:256.65px" width="11" height="9" viewBox="0 0 11 9"><path d="M2.3 4.6 L4.5 6.6 L8.3 2.6" fill="none" stroke="#22a022" stroke-width="1.7"/></svg>
<div class="t" style="left:107.85000000000002px;width:400px;text-align:center;top:257.18px;font-size:9px;line-height:9px;color:#2e2e2e;transform-origin:50% 50%;transform:scaleX(0.85);">72</div>
<div style="left:336.00000000000006px;top:256.65px;width:10.4px;height:9px;background:linear-gradient(135deg,#d8d8d8,#fbfbfb);border:1px solid #8ea2ba;box-sizing:border-box;"></div>
<svg style="left:336.00000000000006px;top:256.65px" width="11" height="9" viewBox="0 0 11 9"><path d="M2.3 4.6 L4.5 6.6 L8.3 2.6" fill="none" stroke="#22a022" stroke-width="1.7"/></svg>
<div style="left:8px;top:271.3px;width:722px;height:22.0px;background:#a8cccc;"></div>
<div style="left:58.6px;top:271.3px;width:1.2px;height:22.0px;background:#d0e3e3;"></div>
<div style="left:111.2px;top:271.3px;width:1.2px;height:22.0px;background:#d0e3e3;"></div>
<div style="left:160.1px;top:271.3px;width:1.2px;height:22.0px;background:#d0e3e3;"></div>
<div style="left:196.6px;top:271.3px;width:1.2px;height:22.0px;background:#d0e3e3;"></div>
<div style="left:232.0px;top:271.3px;width:1.2px;height:22.0px;background:#d0e3e3;"></div>
<div style="left:259.9px;top:271.3px;width:1.2px;height:22.0px;background:#d0e3e3;"></div>
<div style="left:288.0px;top:271.3px;width:1.2px;height:22.0px;background:#d0e3e3;"></div>
<div style="left:326.5px;top:271.3px;width:1.2px;height:22.0px;background:#d0e3e3;"></div>
<div style="left:354.7px;top:271.3px;width:1.2px;height:22.0px;background:#d0e3e3;"></div>
<div style="left:398.0px;top:271.3px;width:1.2px;height:22.0px;background:#d0e3e3;"></div>
<div style="left:453.9px;top:271.3px;width:1.2px;height:22.0px;background:#d0e3e3;"></div>
<div style="left:492.5px;top:271.3px;width:1.2px;height:22.0px;background:#d0e3e3;"></div>
<div style="left:529.1px;top:271.3px;width:1.2px;height:22.0px;background:#d0e3e3;"></div>
<div style="left:556.9px;top:271.3px;width:1.2px;height:22.0px;background:#d0e3e3;"></div>
<div style="left:585.6px;top:271.3px;width:1.2px;height:22.0px;background:#d0e3e3;"></div>
<div style="left:623.0px;top:271.3px;width:1.2px;height:22.0px;background:#d0e3e3;"></div>
<div style="left:668.6px;top:271.3px;width:1.2px;height:22.0px;background:#d0e3e3;"></div>
<div style="left:696.5px;top:271.3px;width:1.2px;height:22.0px;background:#d0e3e3;"></div>
<div style="left:728.1999999999999px;top:271.3px;width:1.2px;height:22.0px;background:#d0e3e3;"></div>
<div style="left:8px;top:292.1px;width:722px;height:1.2px;background:#d0e3e3;"></div>
<svg style="left:22px;top:280.8px" width="5" height="5" viewBox="0 0 5 5"><path d="M4.5 0.5 V4.5 H0.5z" fill="#111"/></svg>
<div class="t" style="right:675.6px;top:277.08px;font-size:9px;line-height:9px;color:#2e2e2e;transform-origin:100% 50%;transform:scaleX(0.85);">PLP-ID</div>
<div class="t" style="left:-114.5px;width:400px;text-align:center;top:277.08px;font-size:9px;line-height:9px;color:#2e2e2e;transform-origin:50% 50%;transform:scaleX(0.85);">Modulation</div>
<div class="t" style="left:-63.75px;width:400px;text-align:center;top:277.08px;font-size:9px;line-height:9px;color:#2e2e2e;transform-origin:50% 50%;transform:scaleX(0.85);">Code Rate</div>
<div class="t" style="left:-21.05000000000001px;width:400px;text-align:center;top:273.28px;font-size:9px;line-height:9px;color:#2e2e2e;transform-origin:50% 50%;transform:scaleX(0.85);">FEC</div>
<div class="t" style="left:-21.05000000000001px;width:400px;text-align:center;top:280.98px;font-size:9px;line-height:9px;color:#2e2e2e;transform-origin:50% 50%;transform:scaleX(0.85);">Length</div>
<div class="t" style="left:14.899999999999977px;width:400px;text-align:center;top:273.28px;font-size:9px;line-height:9px;color:#2e2e2e;transform-origin:50% 50%;transform:scaleX(0.85);">FEC</div>
<div class="t" style="left:14.899999999999977px;width:400px;text-align:center;top:280.98px;font-size:9px;line-height:9px;color:#2e2e2e;transform-origin:50% 50%;transform:scaleX(0.85);">Outer</div>
<div class="t" style="left:46.55000000000001px;width:400px;text-align:center;top:277.08px;font-size:9px;line-height:9px;color:#2e2e2e;transform-origin:50% 50%;transform:scaleX(0.85);">LLS</div>
<div class="t" style="left:74.55000000000001px;width:400px;text-align:center;top:277.08px;font-size:9px;line-height:9px;color:#2e2e2e;transform-origin:50% 50%;transform:scaleX(0.85);">Core</div>
<div class="t" style="left:107.85000000000002px;width:400px;text-align:center;top:273.28px;font-size:9px;line-height:9px;color:#2e2e2e;transform-origin:50% 50%;transform:scaleX(0.85);">LDM</div>
<div class="t" style="left:107.85000000000002px;width:400px;text-align:center;top:280.98px;font-size:9px;line-height:9px;color:#2e2e2e;transform-origin:50% 50%;transform:scaleX(0.85);">Level</div>
<div class="t" style="left:141.20000000000005px;width:400px;text-align:center;top:277.08px;font-size:9px;line-height:9px;color:#2e2e2e;transform-origin:50% 50%;transform:scaleX(0.85);">Disp</div>
<div class="t" style="left:176.95000000000005px;width:400px;text-align:center;top:273.28px;font-size:9px;line-height:9px;color:#2e2e2e;transform-origin:50% 50%;transform:scaleX(0.85);">Num</div>
<div class="t" style="left:176.95000000000005px;width:400px;text-align:center;top:280.98px;font-size:9px;line-height:9px;color:#2e2e2e;transform-origin:50% 50%;transform:scaleX(0.85);">Subslices</div>
<div class="t" style="left:226.55px;width:400px;text-align:center;top:273.28px;font-size:9px;line-height:9px;color:#2e2e2e;transform-origin:50% 50%;transform:scaleX(0.85);">Subslice</div>
<div class="t" style="left:226.55px;width:400px;text-align:center;top:280.98px;font-size:9px;line-height:9px;color:#2e2e2e;transform-origin:50% 50%;transform:scaleX(0.85);">Interval</div>
<div class="t" style="left:273.8px;width:400px;text-align:center;top:277.08px;font-size:9px;line-height:9px;color:#2e2e2e;transform-origin:50% 50%;transform:scaleX(0.85);">TI-Mode</div>
<div class="t" style="left:311.40000000000003px;width:400px;text-align:center;top:273.28px;font-size:9px;line-height:9px;color:#2e2e2e;transform-origin:50% 50%;transform:scaleX(0.85);">CTI</div>
<div class="t" style="left:311.40000000000003px;width:400px;text-align:center;top:280.98px;font-size:9px;line-height:9px;color:#2e2e2e;transform-origin:50% 50%;transform:scaleX(0.85);">Depth</div>
<div class="t" style="left:343.6px;width:400px;text-align:center;top:273.28px;font-size:9px;line-height:9px;color:#2e2e2e;transform-origin:50% 50%;transform:scaleX(0.85);">Ext</div>
<div class="t" style="left:343.6px;width:400px;text-align:center;top:280.98px;font-size:9px;line-height:9px;color:#2e2e2e;transform-origin:50% 50%;transform:scaleX(0.85);">IL</div>
<div class="t" style="left:371.85px;width:400px;text-align:center;top:273.28px;font-size:9px;line-height:9px;color:#2e2e2e;transform-origin:50% 50%;transform:scaleX(0.85);">HTI</div>
<div class="t" style="left:371.85px;width:400px;text-align:center;top:280.98px;font-size:9px;line-height:9px;color:#2e2e2e;transform-origin:50% 50%;transform:scaleX(0.85);">I-Subfr</div>
<div class="t" style="left:404.9000000000001px;width:400px;text-align:center;top:273.28px;font-size:9px;line-height:9px;color:#2e2e2e;transform-origin:50% 50%;transform:scaleX(0.85);">HTI Num</div>
<div class="t" style="left:404.9000000000001px;width:400px;text-align:center;top:280.98px;font-size:9px;line-height:9px;color:#2e2e2e;transform-origin:50% 50%;transform:scaleX(0.85);">TI-blocks</div>
<div class="t" style="left:446.4000000000001px;width:400px;text-align:center;top:273.28px;font-size:9px;line-height:9px;color:#2e2e2e;transform-origin:50% 50%;transform:scaleX(0.85);">HTI Max</div>
<div class="t" style="left:446.4000000000001px;width:400px;text-align:center;top:280.98px;font-size:9px;line-height:9px;color:#2e2e2e;transform-origin:50% 50%;transform:scaleX(0.85);">FEC-blocks</div>
<div class="t" style="left:483.1500000000001px;width:400px;text-align:center;top:273.28px;font-size:9px;line-height:9px;color:#2e2e2e;transform-origin:50% 50%;transform:scaleX(0.85);">HTI</div>
<div class="t" style="left:483.1500000000001px;width:400px;text-align:center;top:280.98px;font-size:9px;line-height:9px;color:#2e2e2e;transform-origin:50% 50%;transform:scaleX(0.85);">Cell IL</div>
<div class="t" style="left:512.95px;width:400px;text-align:center;top:273.28px;font-size:9px;line-height:9px;color:#2e2e2e;transform-origin:50% 50%;transform:scaleX(0.85);">Core</div>
<div class="t" style="left:512.95px;width:400px;text-align:center;top:280.98px;font-size:9px;line-height:9px;color:#2e2e2e;transform-origin:50% 50%;transform:scaleX(0.85);">PLP-ID</div>
<div style="left:8px;top:293.3px;width:722px;height:19.69999999999999px;background:#a8cccc;"></div>
<div style="left:58.6px;top:293.3px;width:1.2px;height:19.69999999999999px;background:#d0e3e3;"></div>
<div style="left:111.2px;top:293.3px;width:1.2px;height:19.69999999999999px;background:#d0e3e3;"></div>
<div style="left:160.1px;top:293.3px;width:1.2px;height:19.69999999999999px;background:#d0e3e3;"></div>
<div style="left:196.6px;top:293.3px;width:1.2px;height:19.69999999999999px;background:#d0e3e3;"></div>
<div style="left:232.0px;top:293.3px;width:1.2px;height:19.69999999999999px;background:#d0e3e3;"></div>
<div style="left:259.9px;top:293.3px;width:1.2px;height:19.69999999999999px;background:#d0e3e3;"></div>
<div style="left:288.0px;top:293.3px;width:1.2px;height:19.69999999999999px;background:#d0e3e3;"></div>
<div style="left:326.5px;top:293.3px;width:1.2px;height:19.69999999999999px;background:#d0e3e3;"></div>
<div style="left:354.7px;top:293.3px;width:1.2px;height:19.69999999999999px;background:#d0e3e3;"></div>
<div style="left:398.0px;top:293.3px;width:1.2px;height:19.69999999999999px;background:#d0e3e3;"></div>
<div style="left:453.9px;top:293.3px;width:1.2px;height:19.69999999999999px;background:#d0e3e3;"></div>
<div style="left:492.5px;top:293.3px;width:1.2px;height:19.69999999999999px;background:#d0e3e3;"></div>
<div style="left:529.1px;top:293.3px;width:1.2px;height:19.69999999999999px;background:#d0e3e3;"></div>
<div style="left:556.9px;top:293.3px;width:1.2px;height:19.69999999999999px;background:#d0e3e3;"></div>
<div style="left:585.6px;top:293.3px;width:1.2px;height:19.69999999999999px;background:#d0e3e3;"></div>
<div style="left:623.0px;top:293.3px;width:1.2px;height:19.69999999999999px;background:#d0e3e3;"></div>
<div style="left:668.6px;top:293.3px;width:1.2px;height:19.69999999999999px;background:#d0e3e3;"></div>
<div style="left:696.5px;top:293.3px;width:1.2px;height:19.69999999999999px;background:#d0e3e3;"></div>
<div style="left:728.1999999999999px;top:293.3px;width:1.2px;height:19.69999999999999px;background:#d0e3e3;"></div>
<div style="left:8px;top:311.8px;width:722px;height:1.2px;background:#d0e3e3;"></div>
<div class="t" style="right:680.1px;top:298.08px;font-size:9px;line-height:9px;color:#2e2e2e;transform-origin:100% 50%;transform:scaleX(0.85);">0</div>
<div class="t" style="left:-114.5px;width:400px;text-align:center;top:298.08px;font-size:9px;line-height:9px;color:#2e2e2e;transform-origin:50% 50%;transform:scaleX(0.85);">QPSK</div>
<div class="t" style="left:-63.75px;width:400px;text-align:center;top:298.08px;font-size:9px;line-height:9px;color:#2e2e2e;transform-origin:50% 50%;transform:scaleX(0.85);">9/15</div>
<div class="t" style="left:-21.05000000000001px;width:400px;text-align:center;top:298.08px;font-size:9px;line-height:9px;color:#2e2e2e;transform-origin:50% 50%;transform:scaleX(0.85);">64K</div>
<div class="t" style="left:14.899999999999977px;width:400px;text-align:center;top:298.08px;font-size:9px;line-height:9px;color:#2e2e2e;transform-origin:50% 50%;transform:scaleX(0.85);">BCH</div>
<div style="left:241.35000000000002px;top:298.15px;width:10.4px;height:9px;background:linear-gradient(135deg,#d8d8d8,#fbfbfb);border:1px solid #8ea2ba;box-sizing:border-box;"></div>
<div style="left:269.35px;top:298.15px;width:10.4px;height:9px;background:linear-gradient(135deg,#d8d8d8,#fbfbfb);border:1px solid #8ea2ba;box-sizing:border-box;"></div>
<svg style="left:269.35px;top:298.15px" width="11" height="9" viewBox="0 0 11 9"><path d="M2.3 4.6 L4.5 6.6 L8.3 2.6" fill="none" stroke="#22a022" stroke-width="1.7"/></svg>
<div class="t" style="left:107.85000000000002px;width:400px;text-align:center;top:298.08px;font-size:9px;line-height:9px;color:#2e2e2e;transform-origin:50% 50%;transform:scaleX(0.85);">-</div>
<div style="left:336.00000000000006px;top:298.15px;width:10.4px;height:9px;background:linear-gradient(135deg,#d8d8d8,#fbfbfb);border:1px solid #8ea2ba;box-sizing:border-box;"></div>
<div class="t" style="left:176.95000000000005px;width:400px;text-align:center;top:298.08px;font-size:9px;line-height:9px;color:#2e2e2e;transform-origin:50% 50%;transform:scaleX(0.85);">-</div>
<div class="t" style="left:226.55px;width:400px;text-align:center;top:298.08px;font-size:9px;line-height:9px;color:#2e2e2e;transform-origin:50% 50%;transform:scaleX(0.85);">-</div>
<div class="t" style="left:273.8px;width:400px;text-align:center;top:298.08px;font-size:9px;line-height:9px;color:#2e2e2e;transform-origin:50% 50%;transform:scaleX(0.85);">HTI</div>
<div class="t" style="left:311.40000000000003px;width:400px;text-align:center;top:298.08px;font-size:9px;line-height:9px;color:#2e2e2e;transform-origin:50% 50%;transform:scaleX(0.85);">-</div>
<div style="left:538.4px;top:298.15px;width:10.4px;height:9px;background:linear-gradient(135deg,#d8d8d8,#fbfbfb);border:1px solid #8ea2ba;box-sizing:border-box;"></div>
<div style="left:566.65px;top:298.15px;width:10.4px;height:9px;background:linear-gradient(135deg,#d8d8d8,#fbfbfb);border:1px solid #8ea2ba;box-sizing:border-box;"></div>
<div class="t" style="left:404.9000000000001px;width:400px;text-align:center;top:298.08px;font-size:9px;line-height:9px;color:#2e2e2e;transform-origin:50% 50%;transform:scaleX(0.85);">1</div>
<div class="t" style="left:446.4000000000001px;width:400px;text-align:center;top:298.08px;font-size:9px;line-height:9px;color:#2e2e2e;transform-origin:50% 50%;transform:scaleX(0.85);">6</div>
<div style="left:677.95px;top:298.15px;width:10.4px;height:9px;background:linear-gradient(135deg,#d8d8d8,#fbfbfb);border:1px solid #8ea2ba;box-sizing:border-box;"></div>
<svg style="left:677.95px;top:298.15px" width="11" height="9" viewBox="0 0 11 9"><path d="M2.3 4.6 L4.5 6.6 L8.3 2.6" fill="none" stroke="#22a022" stroke-width="1.7"/></svg>
<div class="t" style="left:512.95px;width:400px;text-align:center;top:298.08px;font-size:9px;line-height:9px;color:#2e2e2e;transform-origin:50% 50%;transform:scaleX(0.85);">-</div>
<div style="left:8px;top:313px;width:722px;height:18.19999999999999px;background:#a8cccc;"></div>
<div style="left:58.6px;top:313px;width:1.2px;height:18.19999999999999px;background:#d0e3e3;"></div>
<div style="left:111.2px;top:313px;width:1.2px;height:18.19999999999999px;background:#d0e3e3;"></div>
<div style="left:160.1px;top:313px;width:1.2px;height:18.19999999999999px;background:#d0e3e3;"></div>
<div style="left:196.6px;top:313px;width:1.2px;height:18.19999999999999px;background:#d0e3e3;"></div>
<div style="left:232.0px;top:313px;width:1.2px;height:18.19999999999999px;background:#d0e3e3;"></div>
<div style="left:259.9px;top:313px;width:1.2px;height:18.19999999999999px;background:#d0e3e3;"></div>
<div style="left:288.0px;top:313px;width:1.2px;height:18.19999999999999px;background:#d0e3e3;"></div>
<div style="left:326.5px;top:313px;width:1.2px;height:18.19999999999999px;background:#d0e3e3;"></div>
<div style="left:354.7px;top:313px;width:1.2px;height:18.19999999999999px;background:#d0e3e3;"></div>
<div style="left:398.0px;top:313px;width:1.2px;height:18.19999999999999px;background:#d0e3e3;"></div>
<div style="left:453.9px;top:313px;width:1.2px;height:18.19999999999999px;background:#d0e3e3;"></div>
<div style="left:492.5px;top:313px;width:1.2px;height:18.19999999999999px;background:#d0e3e3;"></div>
<div style="left:529.1px;top:313px;width:1.2px;height:18.19999999999999px;background:#d0e3e3;"></div>
<div style="left:556.9px;top:313px;width:1.2px;height:18.19999999999999px;background:#d0e3e3;"></div>
<div style="left:585.6px;top:313px;width:1.2px;height:18.19999999999999px;background:#d0e3e3;"></div>
<div style="left:623.0px;top:313px;width:1.2px;height:18.19999999999999px;background:#d0e3e3;"></div>
<div style="left:668.6px;top:313px;width:1.2px;height:18.19999999999999px;background:#d0e3e3;"></div>
<div style="left:696.5px;top:313px;width:1.2px;height:18.19999999999999px;background:#d0e3e3;"></div>
<div style="left:728.1999999999999px;top:313px;width:1.2px;height:18.19999999999999px;background:#d0e3e3;"></div>
<div class="t" style="right:680.1px;top:317.88px;font-size:9px;line-height:9px;color:#2e2e2e;transform-origin:100% 50%;transform:scaleX(0.85);">1</div>
<div class="t" style="left:-114.5px;width:400px;text-align:center;top:317.88px;font-size:9px;line-height:9px;color:#2e2e2e;transform-origin:50% 50%;transform:scaleX(0.85);">16-QAM</div>
<div class="t" style="left:-63.75px;width:400px;text-align:center;top:317.88px;font-size:9px;line-height:9px;color:#2e2e2e;transform-origin:50% 50%;transform:scaleX(0.85);">9/15</div>
<div class="t" style="left:-21.05000000000001px;width:400px;text-align:center;top:317.88px;font-size:9px;line-height:9px;color:#2e2e2e;transform-origin:50% 50%;transform:scaleX(0.85);">64K</div>
<div class="t" style="left:14.899999999999977px;width:400px;text-align:center;top:317.88px;font-size:9px;line-height:9px;color:#2e2e2e;transform-origin:50% 50%;transform:scaleX(0.85);">BCH</div>
<div style="left:241.35000000000002px;top:317.6px;width:10.4px;height:9px;background:linear-gradient(135deg,#d8d8d8,#fbfbfb);border:1px solid #8ea2ba;box-sizing:border-box;"></div>
<div style="left:269.35px;top:317.6px;width:10.4px;height:9px;background:linear-gradient(135deg,#d8d8d8,#fbfbfb);border:1px solid #8ea2ba;box-sizing:border-box;"></div>
<svg style="left:269.35px;top:317.6px" width="11" height="9" viewBox="0 0 11 9"><path d="M2.3 4.6 L4.5 6.6 L8.3 2.6" fill="none" stroke="#22a022" stroke-width="1.7"/></svg>
<div class="t" style="left:107.85000000000002px;width:400px;text-align:center;top:317.88px;font-size:9px;line-height:9px;color:#2e2e2e;transform-origin:50% 50%;transform:scaleX(0.85);">-</div>
<div style="left:336.00000000000006px;top:317.6px;width:10.4px;height:9px;background:linear-gradient(135deg,#d8d8d8,#fbfbfb);border:1px solid #8ea2ba;box-sizing:border-box;"></div>
<div class="t" style="left:176.95000000000005px;width:400px;text-align:center;top:317.88px;font-size:9px;line-height:9px;color:#2e2e2e;transform-origin:50% 50%;transform:scaleX(0.85);">-</div>
<div class="t" style="left:226.55px;width:400px;text-align:center;top:317.88px;font-size:9px;line-height:9px;color:#2e2e2e;transform-origin:50% 50%;transform:scaleX(0.85);">-</div>
<div class="t" style="left:273.8px;width:400px;text-align:center;top:317.88px;font-size:9px;line-height:9px;color:#2e2e2e;transform-origin:50% 50%;transform:scaleX(0.85);">HTI</div>
<div class="t" style="left:311.40000000000003px;width:400px;text-align:center;top:317.88px;font-size:9px;line-height:9px;color:#2e2e2e;transform-origin:50% 50%;transform:scaleX(0.85);">-</div>
<div style="left:538.4px;top:317.6px;width:10.4px;height:9px;background:linear-gradient(135deg,#d8d8d8,#fbfbfb);border:1px solid #8ea2ba;box-sizing:border-box;"></div>
<div style="left:566.65px;top:317.6px;width:10.4px;height:9px;background:linear-gradient(135deg,#d8d8d8,#fbfbfb);border:1px solid #8ea2ba;box-sizing:border-box;"></div>
<div class="t" style="left:404.9000000000001px;width:400px;text-align:center;top:317.88px;font-size:9px;line-height:9px;color:#2e2e2e;transform-origin:50% 50%;transform:scaleX(0.85);">1</div>
<div class="t" style="left:446.4000000000001px;width:400px;text-align:center;top:317.88px;font-size:9px;line-height:9px;color:#2e2e2e;transform-origin:50% 50%;transform:scaleX(0.85);">15</div>
<div style="left:677.95px;top:317.6px;width:10.4px;height:9px;background:linear-gradient(135deg,#d8d8d8,#fbfbfb);border:1px solid #8ea2ba;box-sizing:border-box;"></div>
<svg style="left:677.95px;top:317.6px" width="11" height="9" viewBox="0 0 11 9"><path d="M2.3 4.6 L4.5 6.6 L8.3 2.6" fill="none" stroke="#22a022" stroke-width="1.7"/></svg>
<div class="t" style="left:512.95px;width:400px;text-align:center;top:317.88px;font-size:9px;line-height:9px;color:#2e2e2e;transform-origin:50% 50%;transform:scaleX(0.85);">-</div>
<div style="left:8px;top:331.2px;width:722px;height:20.400000000000034px;background:#c0ffc0;"></div>
<div style="left:58.6px;top:331.2px;width:1.2px;height:20.400000000000034px;background:#e0ffe0;"></div>
<div style="left:111.2px;top:331.2px;width:1.2px;height:20.400000000000034px;background:#e0ffe0;"></div>
<div style="left:160.1px;top:331.2px;width:1.2px;height:20.400000000000034px;background:#e0ffe0;"></div>
<div style="left:196.6px;top:331.2px;width:1.2px;height:20.400000000000034px;background:#e0ffe0;"></div>
<div style="left:232.0px;top:331.2px;width:1.2px;height:20.400000000000034px;background:#e0ffe0;"></div>
<div style="left:259.9px;top:331.2px;width:1.2px;height:20.400000000000034px;background:#e0ffe0;"></div>
<div style="left:288.0px;top:331.2px;width:1.2px;height:20.400000000000034px;background:#e0ffe0;"></div>
<div style="left:326.5px;top:331.2px;width:1.2px;height:20.400000000000034px;background:#e0ffe0;"></div>
<div style="left:354.7px;top:331.2px;width:1.2px;height:20.400000000000034px;background:#e0ffe0;"></div>
<div style="left:398.0px;top:331.2px;width:1.2px;height:20.400000000000034px;background:#e0ffe0;"></div>
<div style="left:453.9px;top:331.2px;width:1.2px;height:20.400000000000034px;background:#e0ffe0;"></div>
<div style="left:492.5px;top:331.2px;width:1.2px;height:20.400000000000034px;background:#e0ffe0;"></div>
<div style="left:529.1px;top:331.2px;width:1.2px;height:20.400000000000034px;background:#e0ffe0;"></div>
<div style="left:556.9px;top:331.2px;width:1.2px;height:20.400000000000034px;background:#e0ffe0;"></div>
<div style="left:585.6px;top:331.2px;width:1.2px;height:20.400000000000034px;background:#e0ffe0;"></div>
<div style="left:623.0px;top:331.2px;width:1.2px;height:20.400000000000034px;background:#e0ffe0;"></div>
<div style="left:668.6px;top:331.2px;width:1.2px;height:20.400000000000034px;background:#e0ffe0;"></div>
<div style="left:696.5px;top:331.2px;width:1.2px;height:20.400000000000034px;background:#e0ffe0;"></div>
<div style="left:728.1999999999999px;top:331.2px;width:1.2px;height:20.400000000000034px;background:#e0ffe0;"></div>
<svg style="left:12px;top:341.0px" width="5" height="5" viewBox="0 0 5 5"><path d="M4.5 0.5 V4.5 H0.5z" fill="#111"/></svg>
<div class="t" style="left:32px;top:337.38px;font-size:9px;line-height:9px;color:#2e2e2e;transform-origin:0 50%;transform:scaleX(0.85);">16K</div>
<div class="t" style="left:-114.5px;width:400px;text-align:center;top:337.38px;font-size:9px;line-height:9px;color:#2e2e2e;transform-origin:50% 50%;transform:scaleX(0.85);">4_768</div>
<div class="t" style="left:-63.75px;width:400px;text-align:center;top:337.38px;font-size:9px;line-height:9px;color:#2e2e2e;transform-origin:50% 50%;transform:scaleX(0.85);">SP8_2</div>
<div class="t" style="left:-21.05000000000001px;width:400px;text-align:center;top:337.38px;font-size:9px;line-height:9px;color:#2e2e2e;transform-origin:50% 50%;transform:scaleX(0.85);">4</div>
<div class="t" style="left:14.899999999999977px;width:400px;text-align:center;top:337.38px;font-size:9px;line-height:9px;color:#2e2e2e;transform-origin:50% 50%;transform:scaleX(0.85);">0</div>
<div style="left:241.35000000000002px;top:336.9px;width:10.4px;height:9px;background:linear-gradient(135deg,#d8d8d8,#fbfbfb);border:1px solid #8ea2ba;box-sizing:border-box;"></div>
<svg style="left:241.35000000000002px;top:336.9px" width="11" height="9" viewBox="0 0 11 9"><path d="M2.3 4.6 L4.5 6.6 L8.3 2.6" fill="none" stroke="#22a022" stroke-width="1.7"/></svg>
<div style="left:269.35px;top:336.9px;width:10.4px;height:9px;background:linear-gradient(135deg,#d8d8d8,#fbfbfb);border:1px solid #8ea2ba;box-sizing:border-box;"></div>
<svg style="left:269.35px;top:336.9px" width="11" height="9" viewBox="0 0 11 9"><path d="M2.3 4.6 L4.5 6.6 L8.3 2.6" fill="none" stroke="#22a022" stroke-width="1.7"/></svg>
<div class="t" style="left:107.85000000000002px;width:400px;text-align:center;top:337.38px;font-size:9px;line-height:9px;color:#2e2e2e;transform-origin:50% 50%;transform:scaleX(0.85);">48</div>
<div style="left:336.00000000000006px;top:336.9px;width:10.4px;height:9px;background:linear-gradient(135deg,#d8d8d8,#fbfbfb);border:1px solid #8ea2ba;box-sizing:border-box;"></div>
<svg style="left:336.00000000000006px;top:336.9px" width="11" height="9" viewBox="0 0 11 9"><path d="M2.3 4.6 L4.5 6.6 L8.3 2.6" fill="none" stroke="#22a022" stroke-width="1.7"/></svg>
<div style="left:8px;top:351.6px;width:722px;height:21.599999999999966px;background:#99cc99;"></div>
<div style="left:58.6px;top:351.6px;width:1.2px;height:21.599999999999966px;background:#cde5cd;"></div>
<div style="left:111.2px;top:351.6px;width:1.2px;height:21.599999999999966px;background:#cde5cd;"></div>
<div style="left:160.1px;top:351.6px;width:1.2px;height:21.599999999999966px;background:#cde5cd;"></div>
<div style="left:196.6px;top:351.6px;width:1.2px;height:21.599999999999966px;background:#cde5cd;"></div>
<div style="left:232.0px;top:351.6px;width:1.2px;height:21.599999999999966px;background:#cde5cd;"></div>
<div style="left:259.9px;top:351.6px;width:1.2px;height:21.599999999999966px;background:#cde5cd;"></div>
<div style="left:288.0px;top:351.6px;width:1.2px;height:21.599999999999966px;background:#cde5cd;"></div>
<div style="left:326.5px;top:351.6px;width:1.2px;height:21.599999999999966px;background:#cde5cd;"></div>
<div style="left:354.7px;top:351.6px;width:1.2px;height:21.599999999999966px;background:#cde5cd;"></div>
<div style="left:398.0px;top:351.6px;width:1.2px;height:21.599999999999966px;background:#cde5cd;"></div>
<div style="left:453.9px;top:351.6px;width:1.2px;height:21.599999999999966px;background:#cde5cd;"></div>
<div style="left:492.5px;top:351.6px;width:1.2px;height:21.599999999999966px;background:#cde5cd;"></div>
<div style="left:529.1px;top:351.6px;width:1.2px;height:21.599999999999966px;background:#cde5cd;"></div>
<div style="left:556.9px;top:351.6px;width:1.2px;height:21.599999999999966px;background:#cde5cd;"></div>
<div style="left:585.6px;top:351.6px;width:1.2px;height:21.599999999999966px;background:#cde5cd;"></div>
<div style="left:623.0px;top:351.6px;width:1.2px;height:21.599999999999966px;background:#cde5cd;"></div>
<div style="left:668.6px;top:351.6px;width:1.2px;height:21.599999999999966px;background:#cde5cd;"></div>
<div style="left:696.5px;top:351.6px;width:1.2px;height:21.599999999999966px;background:#cde5cd;"></div>
<div style="left:728.1999999999999px;top:351.6px;width:1.2px;height:21.599999999999966px;background:#cde5cd;"></div>
<div style="left:8px;top:372.0px;width:722px;height:1.2px;background:#cde5cd;"></div>
<svg style="left:22px;top:361.1px" width="5" height="5" viewBox="0 0 5 5"><path d="M4.5 0.5 V4.5 H0.5z" fill="#111"/></svg>
<div class="t" style="right:675.6px;top:357.38px;font-size:9px;line-height:9px;color:#2e2e2e;transform-origin:100% 50%;transform:scaleX(0.85);">PLP-ID</div>
<div class="t" style="left:-114.5px;width:400px;text-align:center;top:357.38px;font-size:9px;line-height:9px;color:#2e2e2e;transform-origin:50% 50%;transform:scaleX(0.85);">Modulation</div>
<div class="t" style="left:-63.75px;width:400px;text-align:center;top:357.38px;font-size:9px;line-height:9px;color:#2e2e2e;transform-origin:50% 50%;transform:scaleX(0.85);">Code Rate</div>
<div class="t" style="left:-21.05000000000001px;width:400px;text-align:center;top:353.58px;font-size:9px;line-height:9px;color:#2e2e2e;transform-origin:50% 50%;transform:scaleX(0.85);">FEC</div>
<div class="t" style="left:-21.05000000000001px;width:400px;text-align:center;top:361.28px;font-size:9px;line-height:9px;color:#2e2e2e;transform-origin:50% 50%;transform:scaleX(0.85);">Length</div>
<div class="t" style="left:14.899999999999977px;width:400px;text-align:center;top:353.58px;font-size:9px;line-height:9px;color:#2e2e2e;transform-origin:50% 50%;transform:scaleX(0.85);">FEC</div>
<div class="t" style="left:14.899999999999977px;width:400px;text-align:center;top:361.28px;font-size:9px;line-height:9px;color:#2e2e2e;transform-origin:50% 50%;transform:scaleX(0.85);">Outer</div>
<div class="t" style="left:46.55000000000001px;width:400px;text-align:center;top:357.38px;font-size:9px;line-height:9px;color:#2e2e2e;transform-origin:50% 50%;transform:scaleX(0.85);">LLS</div>
<div class="t" style="left:74.55000000000001px;width:400px;text-align:center;top:357.38px;font-size:9px;line-height:9px;color:#2e2e2e;transform-origin:50% 50%;transform:scaleX(0.85);">Core</div>
<div class="t" style="left:107.85000000000002px;width:400px;text-align:center;top:353.58px;font-size:9px;line-height:9px;color:#2e2e2e;transform-origin:50% 50%;transform:scaleX(0.85);">LDM</div>
<div class="t" style="left:107.85000000000002px;width:400px;text-align:center;top:361.28px;font-size:9px;line-height:9px;color:#2e2e2e;transform-origin:50% 50%;transform:scaleX(0.85);">Level</div>
<div class="t" style="left:141.20000000000005px;width:400px;text-align:center;top:357.38px;font-size:9px;line-height:9px;color:#2e2e2e;transform-origin:50% 50%;transform:scaleX(0.85);">Disp</div>
<div class="t" style="left:176.95000000000005px;width:400px;text-align:center;top:353.58px;font-size:9px;line-height:9px;color:#2e2e2e;transform-origin:50% 50%;transform:scaleX(0.85);">Num</div>
<div class="t" style="left:176.95000000000005px;width:400px;text-align:center;top:361.28px;font-size:9px;line-height:9px;color:#2e2e2e;transform-origin:50% 50%;transform:scaleX(0.85);">Subslices</div>
<div class="t" style="left:226.55px;width:400px;text-align:center;top:353.58px;font-size:9px;line-height:9px;color:#2e2e2e;transform-origin:50% 50%;transform:scaleX(0.85);">Subslice</div>
<div class="t" style="left:226.55px;width:400px;text-align:center;top:361.28px;font-size:9px;line-height:9px;color:#2e2e2e;transform-origin:50% 50%;transform:scaleX(0.85);">Interval</div>
<div class="t" style="left:273.8px;width:400px;text-align:center;top:357.38px;font-size:9px;line-height:9px;color:#2e2e2e;transform-origin:50% 50%;transform:scaleX(0.85);">TI-Mode</div>
<div class="t" style="left:311.40000000000003px;width:400px;text-align:center;top:353.58px;font-size:9px;line-height:9px;color:#2e2e2e;transform-origin:50% 50%;transform:scaleX(0.85);">CTI</div>
<div class="t" style="left:311.40000000000003px;width:400px;text-align:center;top:361.28px;font-size:9px;line-height:9px;color:#2e2e2e;transform-origin:50% 50%;transform:scaleX(0.85);">Depth</div>
<div class="t" style="left:343.6px;width:400px;text-align:center;top:353.58px;font-size:9px;line-height:9px;color:#2e2e2e;transform-origin:50% 50%;transform:scaleX(0.85);">Ext</div>
<div class="t" style="left:343.6px;width:400px;text-align:center;top:361.28px;font-size:9px;line-height:9px;color:#2e2e2e;transform-origin:50% 50%;transform:scaleX(0.85);">IL</div>
<div class="t" style="left:371.85px;width:400px;text-align:center;top:353.58px;font-size:9px;line-height:9px;color:#2e2e2e;transform-origin:50% 50%;transform:scaleX(0.85);">HTI</div>
<div class="t" style="left:371.85px;width:400px;text-align:center;top:361.28px;font-size:9px;line-height:9px;color:#2e2e2e;transform-origin:50% 50%;transform:scaleX(0.85);">I-Subfr</div>
<div class="t" style="left:404.9000000000001px;width:400px;text-align:center;top:353.58px;font-size:9px;line-height:9px;color:#2e2e2e;transform-origin:50% 50%;transform:scaleX(0.85);">HTI Num</div>
<div class="t" style="left:404.9000000000001px;width:400px;text-align:center;top:361.28px;font-size:9px;line-height:9px;color:#2e2e2e;transform-origin:50% 50%;transform:scaleX(0.85);">TI-blocks</div>
<div class="t" style="left:446.4000000000001px;width:400px;text-align:center;top:353.58px;font-size:9px;line-height:9px;color:#2e2e2e;transform-origin:50% 50%;transform:scaleX(0.85);">HTI Max</div>
<div class="t" style="left:446.4000000000001px;width:400px;text-align:center;top:361.28px;font-size:9px;line-height:9px;color:#2e2e2e;transform-origin:50% 50%;transform:scaleX(0.85);">FEC-blocks</div>
<div class="t" style="left:483.1500000000001px;width:400px;text-align:center;top:353.58px;font-size:9px;line-height:9px;color:#2e2e2e;transform-origin:50% 50%;transform:scaleX(0.85);">HTI</div>
<div class="t" style="left:483.1500000000001px;width:400px;text-align:center;top:361.28px;font-size:9px;line-height:9px;color:#2e2e2e;transform-origin:50% 50%;transform:scaleX(0.85);">Cell IL</div>
<div class="t" style="left:512.95px;width:400px;text-align:center;top:353.58px;font-size:9px;line-height:9px;color:#2e2e2e;transform-origin:50% 50%;transform:scaleX(0.85);">Core</div>
<div class="t" style="left:512.95px;width:400px;text-align:center;top:361.28px;font-size:9px;line-height:9px;color:#2e2e2e;transform-origin:50% 50%;transform:scaleX(0.85);">PLP-ID</div>
<div style="left:8px;top:373.2px;width:722px;height:19.900000000000034px;background:#99cc99;"></div>
<div style="left:58.6px;top:373.2px;width:1.2px;height:19.900000000000034px;background:#cde5cd;"></div>
<div style="left:111.2px;top:373.2px;width:1.2px;height:19.900000000000034px;background:#cde5cd;"></div>
<div style="left:160.1px;top:373.2px;width:1.2px;height:19.900000000000034px;background:#cde5cd;"></div>
<div style="left:196.6px;top:373.2px;width:1.2px;height:19.900000000000034px;background:#cde5cd;"></div>
<div style="left:232.0px;top:373.2px;width:1.2px;height:19.900000000000034px;background:#cde5cd;"></div>
<div style="left:259.9px;top:373.2px;width:1.2px;height:19.900000000000034px;background:#cde5cd;"></div>
<div style="left:288.0px;top:373.2px;width:1.2px;height:19.900000000000034px;background:#cde5cd;"></div>
<div style="left:326.5px;top:373.2px;width:1.2px;height:19.900000000000034px;background:#cde5cd;"></div>
<div style="left:354.7px;top:373.2px;width:1.2px;height:19.900000000000034px;background:#cde5cd;"></div>
<div style="left:398.0px;top:373.2px;width:1.2px;height:19.900000000000034px;background:#cde5cd;"></div>
<div style="left:453.9px;top:373.2px;width:1.2px;height:19.900000000000034px;background:#cde5cd;"></div>
<div style="left:492.5px;top:373.2px;width:1.2px;height:19.900000000000034px;background:#cde5cd;"></div>
<div style="left:529.1px;top:373.2px;width:1.2px;height:19.900000000000034px;background:#cde5cd;"></div>
<div style="left:556.9px;top:373.2px;width:1.2px;height:19.900000000000034px;background:#cde5cd;"></div>
<div style="left:585.6px;top:373.2px;width:1.2px;height:19.900000000000034px;background:#cde5cd;"></div>
<div style="left:623.0px;top:373.2px;width:1.2px;height:19.900000000000034px;background:#cde5cd;"></div>
<div style="left:668.6px;top:373.2px;width:1.2px;height:19.900000000000034px;background:#cde5cd;"></div>
<div style="left:696.5px;top:373.2px;width:1.2px;height:19.900000000000034px;background:#cde5cd;"></div>
<div style="left:728.1999999999999px;top:373.2px;width:1.2px;height:19.900000000000034px;background:#cde5cd;"></div>
<div style="left:8px;top:391.90000000000003px;width:722px;height:1.2px;background:#cde5cd;"></div>
<div class="t" style="right:680.1px;top:377.98px;font-size:9px;line-height:9px;color:#2e2e2e;transform-origin:100% 50%;transform:scaleX(0.85);">2</div>
<div class="t" style="left:-114.5px;width:400px;text-align:center;top:377.98px;font-size:9px;line-height:9px;color:#2e2e2e;transform-origin:50% 50%;transform:scaleX(0.85);">QPSK</div>
<div class="t" style="left:-63.75px;width:400px;text-align:center;top:377.98px;font-size:9px;line-height:9px;color:#2e2e2e;transform-origin:50% 50%;transform:scaleX(0.85);">9/15</div>
<div class="t" style="left:-21.05000000000001px;width:400px;text-align:center;top:377.98px;font-size:9px;line-height:9px;color:#2e2e2e;transform-origin:50% 50%;transform:scaleX(0.85);">64K</div>
<div class="t" style="left:14.899999999999977px;width:400px;text-align:center;top:377.98px;font-size:9px;line-height:9px;color:#2e2e2e;transform-origin:50% 50%;transform:scaleX(0.85);">BCH</div>
<div style="left:241.35000000000002px;top:378.15px;width:10.4px;height:9px;background:linear-gradient(135deg,#d8d8d8,#fbfbfb);border:1px solid #8ea2ba;box-sizing:border-box;"></div>
<div style="left:269.35px;top:378.15px;width:10.4px;height:9px;background:linear-gradient(135deg,#d8d8d8,#fbfbfb);border:1px solid #8ea2ba;box-sizing:border-box;"></div>
<svg style="left:269.35px;top:378.15px" width="11" height="9" viewBox="0 0 11 9"><path d="M2.3 4.6 L4.5 6.6 L8.3 2.6" fill="none" stroke="#22a022" stroke-width="1.7"/></svg>
<div class="t" style="left:107.85000000000002px;width:400px;text-align:center;top:377.98px;font-size:9px;line-height:9px;color:#2e2e2e;transform-origin:50% 50%;transform:scaleX(0.85);">-</div>
<div style="left:336.00000000000006px;top:378.15px;width:10.4px;height:9px;background:linear-gradient(135deg,#d8d8d8,#fbfbfb);border:1px solid #8ea2ba;box-sizing:border-box;"></div>
<div class="t" style="left:176.95000000000005px;width:400px;text-align:center;top:377.98px;font-size:9px;line-height:9px;color:#2e2e2e;transform-origin:50% 50%;transform:scaleX(0.85);">-</div>
<div class="t" style="left:226.55px;width:400px;text-align:center;top:377.98px;font-size:9px;line-height:9px;color:#2e2e2e;transform-origin:50% 50%;transform:scaleX(0.85);">-</div>
<div class="t" style="left:273.8px;width:400px;text-align:center;top:377.98px;font-size:9px;line-height:9px;color:#2e2e2e;transform-origin:50% 50%;transform:scaleX(0.85);">HTI</div>
<div class="t" style="left:311.40000000000003px;width:400px;text-align:center;top:377.98px;font-size:9px;line-height:9px;color:#2e2e2e;transform-origin:50% 50%;transform:scaleX(0.85);">-</div>
<div style="left:538.4px;top:378.15px;width:10.4px;height:9px;background:linear-gradient(135deg,#d8d8d8,#fbfbfb);border:1px solid #8ea2ba;box-sizing:border-box;"></div>
<div style="left:566.65px;top:378.15px;width:10.4px;height:9px;background:linear-gradient(135deg,#d8d8d8,#fbfbfb);border:1px solid #8ea2ba;box-sizing:border-box;"></div>
<div class="t" style="left:404.9000000000001px;width:400px;text-align:center;top:377.98px;font-size:9px;line-height:9px;color:#2e2e2e;transform-origin:50% 50%;transform:scaleX(0.85);">2</div>
<div class="t" style="left:446.4000000000001px;width:400px;text-align:center;top:377.98px;font-size:9px;line-height:9px;color:#2e2e2e;transform-origin:50% 50%;transform:scaleX(0.85);">18</div>
<div style="left:677.95px;top:378.15px;width:10.4px;height:9px;background:linear-gradient(135deg,#d8d8d8,#fbfbfb);border:1px solid #8ea2ba;box-sizing:border-box;"></div>
<svg style="left:677.95px;top:378.15px" width="11" height="9" viewBox="0 0 11 9"><path d="M2.3 4.6 L4.5 6.6 L8.3 2.6" fill="none" stroke="#22a022" stroke-width="1.7"/></svg>
<div class="t" style="left:512.95px;width:400px;text-align:center;top:377.98px;font-size:9px;line-height:9px;color:#2e2e2e;transform-origin:50% 50%;transform:scaleX(0.85);">-</div>
<div style="left:8px;top:393.1px;width:722px;height:18.899999999999977px;background:#99cc99;"></div>
<div style="left:58.6px;top:393.1px;width:1.2px;height:18.899999999999977px;background:#cde5cd;"></div>
<div style="left:111.2px;top:393.1px;width:1.2px;height:18.899999999999977px;background:#cde5cd;"></div>
<div style="left:160.1px;top:393.1px;width:1.2px;height:18.899999999999977px;background:#cde5cd;"></div>
<div style="left:196.6px;top:393.1px;width:1.2px;height:18.899999999999977px;background:#cde5cd;"></div>
<div style="left:232.0px;top:393.1px;width:1.2px;height:18.899999999999977px;background:#cde5cd;"></div>
<div style="left:259.9px;top:393.1px;width:1.2px;height:18.899999999999977px;background:#cde5cd;"></div>
<div style="left:288.0px;top:393.1px;width:1.2px;height:18.899999999999977px;background:#cde5cd;"></div>
<div style="left:326.5px;top:393.1px;width:1.2px;height:18.899999999999977px;background:#cde5cd;"></div>
<div style="left:354.7px;top:393.1px;width:1.2px;height:18.899999999999977px;background:#cde5cd;"></div>
<div style="left:398.0px;top:393.1px;width:1.2px;height:18.899999999999977px;background:#cde5cd;"></div>
<div style="left:453.9px;top:393.1px;width:1.2px;height:18.899999999999977px;background:#cde5cd;"></div>
<div style="left:492.5px;top:393.1px;width:1.2px;height:18.899999999999977px;background:#cde5cd;"></div>
<div style="left:529.1px;top:393.1px;width:1.2px;height:18.899999999999977px;background:#cde5cd;"></div>
<div style="left:556.9px;top:393.1px;width:1.2px;height:18.899999999999977px;background:#cde5cd;"></div>
<div style="left:585.6px;top:393.1px;width:1.2px;height:18.899999999999977px;background:#cde5cd;"></div>
<div style="left:623.0px;top:393.1px;width:1.2px;height:18.899999999999977px;background:#cde5cd;"></div>
<div style="left:668.6px;top:393.1px;width:1.2px;height:18.899999999999977px;background:#cde5cd;"></div>
<div style="left:696.5px;top:393.1px;width:1.2px;height:18.899999999999977px;background:#cde5cd;"></div>
<div style="left:728.1999999999999px;top:393.1px;width:1.2px;height:18.899999999999977px;background:#cde5cd;"></div>
<div class="t" style="right:680.1px;top:397.88px;font-size:9px;line-height:9px;color:#2e2e2e;transform-origin:100% 50%;transform:scaleX(0.85);">3</div>
<div class="t" style="left:-114.5px;width:400px;text-align:center;top:397.88px;font-size:9px;line-height:9px;color:#2e2e2e;transform-origin:50% 50%;transform:scaleX(0.85);">256-QAM</div>
<div class="t" style="left:-63.75px;width:400px;text-align:center;top:397.88px;font-size:9px;line-height:9px;color:#2e2e2e;transform-origin:50% 50%;transform:scaleX(0.85);">9/15</div>
<div class="t" style="left:-21.05000000000001px;width:400px;text-align:center;top:397.88px;font-size:9px;line-height:9px;color:#2e2e2e;transform-origin:50% 50%;transform:scaleX(0.85);">64K</div>
<div class="t" style="left:14.899999999999977px;width:400px;text-align:center;top:397.88px;font-size:9px;line-height:9px;color:#2e2e2e;transform-origin:50% 50%;transform:scaleX(0.85);">BCH</div>
<div style="left:241.35000000000002px;top:398.05px;width:10.4px;height:9px;background:linear-gradient(135deg,#d8d8d8,#fbfbfb);border:1px solid #8ea2ba;box-sizing:border-box;"></div>
<div style="left:269.35px;top:398.05px;width:10.4px;height:9px;background:linear-gradient(135deg,#d8d8d8,#fbfbfb);border:1px solid #8ea2ba;box-sizing:border-box;"></div>
<div class="t" style="left:107.85000000000002px;width:400px;text-align:center;top:397.88px;font-size:9px;line-height:9px;color:#2e2e2e;transform-origin:50% 50%;transform:scaleX(0.85);">8</div>
<div style="left:336.00000000000006px;top:398.05px;width:10.4px;height:9px;background:#fff;"></div>
<div class="t" style="left:176.95000000000005px;width:400px;text-align:center;top:397.88px;font-size:9px;line-height:9px;color:#2e2e2e;transform-origin:50% 50%;transform:scaleX(0.85);">-</div>
<div class="t" style="left:226.55px;width:400px;text-align:center;top:397.88px;font-size:9px;line-height:9px;color:#2e2e2e;transform-origin:50% 50%;transform:scaleX(0.85);">-</div>
<div class="t" style="left:273.8px;width:400px;text-align:center;top:397.88px;font-size:9px;line-height:9px;color:#2e2e2e;transform-origin:50% 50%;transform:scaleX(0.85);">-</div>
<div class="t" style="left:311.40000000000003px;width:400px;text-align:center;top:397.88px;font-size:9px;line-height:9px;color:#2e2e2e;transform-origin:50% 50%;transform:scaleX(0.85);">-</div>
<div style="left:538.4px;top:398.05px;width:10.4px;height:9px;background:#fff;"></div>
<div style="left:566.65px;top:398.05px;width:10.4px;height:9px;background:#fff;"></div>
<div class="t" style="left:404.9000000000001px;width:400px;text-align:center;top:397.88px;font-size:9px;line-height:9px;color:#2e2e2e;transform-origin:50% 50%;transform:scaleX(0.85);">-</div>
<div class="t" style="left:446.4000000000001px;width:400px;text-align:center;top:397.88px;font-size:9px;line-height:9px;color:#2e2e2e;transform-origin:50% 50%;transform:scaleX(0.85);">-</div>
<div style="left:677.95px;top:398.05px;width:10.4px;height:9px;background:#fff;"></div>
<div class="t" style="left:512.95px;width:400px;text-align:center;top:397.88px;font-size:9px;line-height:9px;color:#2e2e2e;transform-origin:50% 50%;transform:scaleX(0.85);">2</div>
<div style="left:8px;top:410.8px;width:722px;height:1.2px;background:#cde5cd;"></div>
</body></html>
